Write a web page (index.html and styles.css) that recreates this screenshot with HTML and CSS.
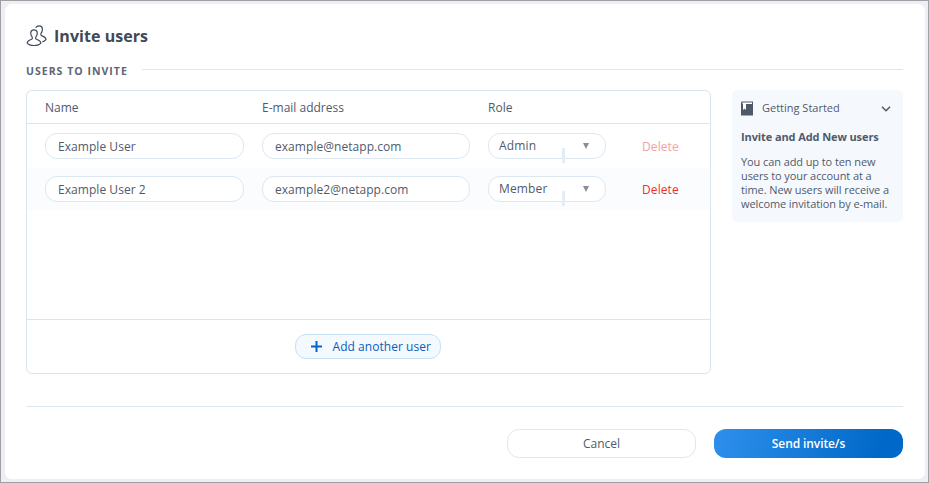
FILE: index.html
```html
<!DOCTYPE html>
<html lang="en">
<head>
<meta charset="utf-8">
<title>Invite users</title>
<link rel="stylesheet" href="styles.css">
</head>
<body>
<main class="card">
  <header class="page-head">
    <svg class="users-icon" width="22" height="22" viewBox="0 0 22 22">
      <path d="M8 4.800C5.900 4.800 4.700 6.200 4.700 8.200C4.700 10 5.400 11.100 6.200 12.200C6.800 13.600 6 14.200 4.400 14.800C2.200 15.600 1.200 16.400 1.200 18.200C2.500 19.900 5.300 20.500 8 20.500C10.700 20.500 13.500 19.900 14.800 18.200C14.800 16.400 13.800 15.600 11.600 14.800C10 14.200 9.200 13.600 9.800 12.200C10.600 11.100 11.300 10 11.300 8.200C11.300 6.200 10.100 4.800 8 4.800Z"/>
      <path d="M9.700 2.800C10.400 1.500 11.500 .9 13 .9C15.200 .9 16.400 2.400 16.400 4.500C16.400 6.200 15.700 7.400 15 8.400C14.400 9.800 15.200 10.500 16.700 11.100C18.900 12 19.900 12.800 19.900 14.600C19.100 15.800 17.900 16.500 16.300 16.800"/>
    </svg>
    <h1 class="title">Invite users</h1>
  </header>
  <div class="section-head"><h2 class="section-title">USERS TO INVITE</h2><span class="rule"></span></div>
  <div class="content">
    <section class="table">
      <div class="row head"><span>Name</span><span>E-mail address</span><span>Role</span></div>
      <div class="rows">
        <div class="row">
          <div class="field">Example User</div>
          <div class="field">example@netapp.com</div>
          <div class="field select">Admin<i class="caret"></i><i class="divider"></i></div>
          <span class="delete disabled">Delete</span>
        </div>
        <div class="row alt">
          <div class="field">Example User 2</div>
          <div class="field">example2@netapp.com</div>
          <div class="field select">Member<i class="caret"></i><i class="divider"></i></div>
          <span class="delete">Delete</span>
        </div>
      </div>
      <div class="table-foot">
        <button class="add"><svg width="11" height="11" viewBox="0 0 11 11"><path d="M5.500 0V11M0 5.500H11"/></svg><span>Add another user</span></button>
      </div>
    </section>
    <aside class="help">
      <div class="help-head">
        <svg width="12" height="15" viewBox="0 0 12 15"><path fill="#4d5969" d="M1 .5H12V14.500H0V1.500Q0 .5 1 .5Z"/><path fill="#fff" d="M1.500 1.500H11V3H1.500ZM2 3H5V9L3.500 7.500L2 9Z"/></svg>
        <span>Getting Started</span>
        <svg class="chevron" width="10" height="6" viewBox="0 0 10 6"><path d="M1 .8L5 4.800L9 .8"/></svg>
      </div>
      <h3 class="help-title">Invite and Add New users</h3>
      <p class="help-text">You can add up to ten new<br>users to your account at a<br>time. New users will receive a<br>welcome invitation by e-mail.</p>
    </aside>
  </div>
  <footer class="actions">
    <button class="btn">Cancel</button>
    <button class="btn primary">Send invite/s</button>
  </footer>
</main>
</body>
</html>
```
FILE: styles.css
```css
* { box-sizing: border-box; }
body {
  margin: 0;
  width: 929px;
  height: 483px;
  padding: 3px 3px 3px 4px;
  border: 1px solid #a0a0a0;
  background: #efeef7;
  font: 500 12px/16px "Open Sans", sans-serif;
  color: #515a6b;
  overflow: hidden;
}
.card {
  width: 920px;
  height: 475px;
  padding: 20px 22px 0 21px;
  border-radius: 7px;
  background: #fff;
}
.page-head { display: flex; height: 24px; }
.users-icon { margin-top: 1px; fill: none; stroke: #404958; stroke-width: 1.2; }
.title { margin: 0 0 0 6px; font-size: 16px; line-height: 24px; font-weight: 700; letter-spacing: .05px; color: #404958; }
.section-head { display: flex; align-items: center; height: 18px; margin-top: 14px; }
.section-title { margin: 0; width: 116px; font-size: 10.500px; line-height: 18px; font-weight: 700; letter-spacing: 1.02px; white-space: nowrap; color: #5d6574; }
.rule { flex: 1; height: 1px; margin-top: -3px; background: #dce7f2; }
.content { display: flex; gap: 21px; margin-top: 10px; }
.table { width: 685px; height: 284px; border: 1px solid #d8e4f0; border-radius: 6px; display: flex; flex-direction: column; }
.row { display: grid; grid-template-columns: 199px 208px 118px 60px; column-gap: 18px; padding: 8px 0 8px 18px; height: 42px; align-items: center; }
.head { height: 33px; padding: 1px 0 0 18px; border-bottom: 1px solid #d8e4f0; }
.rows { flex: 1; padding-top: 1px; }
.rows .row + .row { margin-top: 1px; }
.alt { background: #fafcfe; }
.field { position: relative; height: 26px; padding: 0 12px; border: 1px solid #dce7f2; border-radius: 12px; background: #fff; line-height: 25px; letter-spacing: .05px; }
.select { padding-left: 10px; line-height: 24px; letter-spacing: .15px; }
.caret { position: absolute; right: 16px; top: 9px; border: 3.500px solid transparent; border-top: 6px solid #858e9a; border-bottom: 0; }
.divider { position: absolute; left: 73px; top: 14px; width: 3px; height: 15px; background: #e4ecf6; }
.delete { padding: 1px 0 0 18px; letter-spacing: .1px; color: #f02d2d; }
.delete.disabled { color: #f4a2a2; }
.table-foot { height: 54px; border-top: 1px solid #d8e4f0; display: flex; justify-content: center; padding: 14px 2px 0 0; }
button { font: inherit; padding: 0; }
.add { display: flex; align-items: center; gap: 11px; width: 146px; height: 25px; padding-left: 15px; border: 1px solid #c6e3f5; border-radius: 11px; background: #f3f9fe; color: #0a5ebc; letter-spacing: .04px; }
.add svg { fill: none; stroke: #0867c5; stroke-width: 2; }
.help { width: 171px; height: 132px; padding: 10px 9px 0; border-radius: 5px; background: #f5f9fd; font-size: 11px; }
.help-head { display: flex; align-items: center; height: 16px; gap: 9px; }
.chevron { margin: 1px 3px 0 auto; fill: none; stroke: #4d5969; stroke-width: 1.500; }
.help-title { margin: 13px 0 0; font-size: 11px; line-height: 16px; font-weight: 700; letter-spacing: -.1px; white-space: nowrap; }
.help-text { margin: 10px 0 0; font-size: 11px; line-height: 14px; font-weight: 400; letter-spacing: -.09px; white-space: nowrap; }
.actions { display: flex; justify-content: flex-end; gap: 18px; margin-top: 32px; padding-top: 22px; border-top: 1px solid #dce7f0; }
.btn { width: 189px; height: 29px; border: 1px solid #dce7f2; border-radius: 12px; background: #fff; color: #515a6b; }
.primary { border: 0; background: linear-gradient(105deg, #2c8eea 5%, #0068c8 88%); color: #fff; font-weight: 600; letter-spacing: -.1px; }
```
